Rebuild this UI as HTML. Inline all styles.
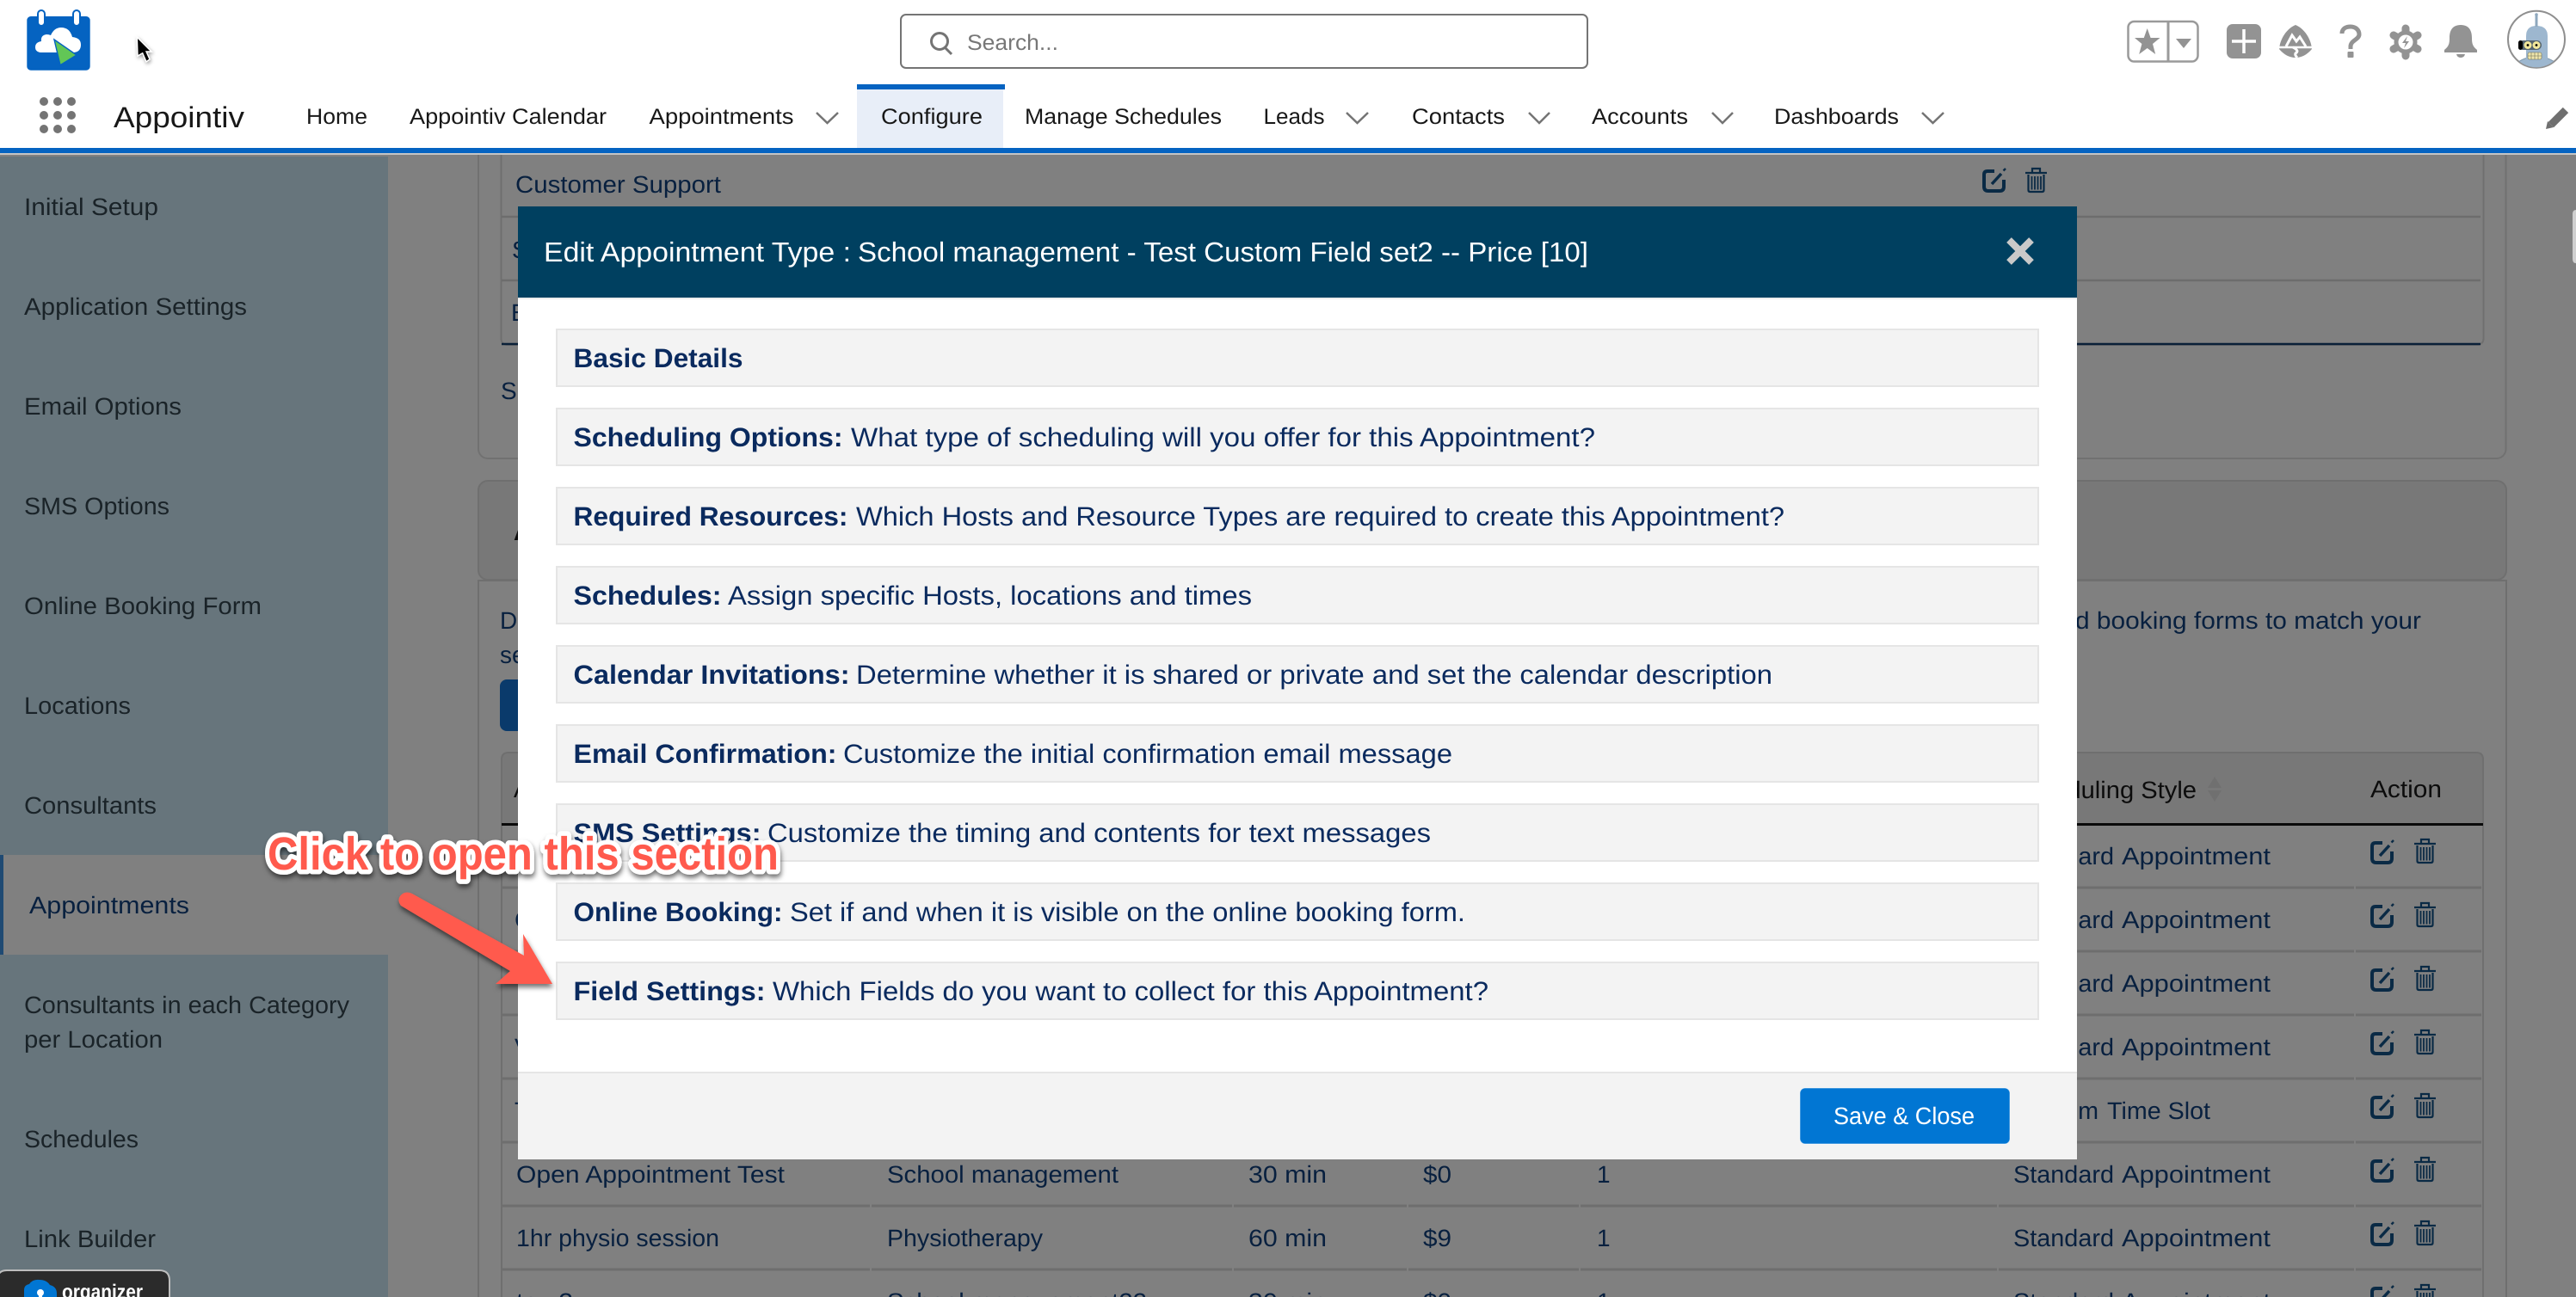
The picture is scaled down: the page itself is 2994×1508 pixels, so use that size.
<!DOCTYPE html>
<html lang="en">
<head>
<meta charset="utf-8">
<title>Appointiv - Configure</title>
<style>
html,body{margin:0;padding:0;width:2994px;height:1508px;overflow:hidden;background:#808080}
svg{display:block}
text{font-family:"Liberation Sans",sans-serif;text-rendering:geometricPrecision}
.n{font-size:25.5px;fill:#181818}
.s{font-size:28px;fill:#1a2328}
.b{font-size:28px;fill:#08203f}
.h{font-size:28px;fill:#0c0c0c}
.m{font-size:31px;fill:#0a2a5e}
.mb{font-size:31px;fill:#0a2a5e;font-weight:bold}
.box{fill:#f3f3f3;stroke:#e5e5e5;stroke-width:2}
</style>
</head>
<body>
<svg xmlns="http://www.w3.org/2000/svg" width="2994" height="1508" viewBox="0 0 2994 1508">
<defs>
<g id="ed" fill="none" stroke="#0a2a45">
<path d="M14 3H6Q2 3 2 7V21Q2 26 7 26H20Q25 26 25 21V13" stroke-width="4"/>
<path d="M11 18L22 6" stroke-width="3.5"/>
<path d="M24.500 2.500L27 0" stroke-width="2.500"/>
</g>
<g id="tr" fill="none" stroke="#0a2a45" stroke-width="2.200">
<path d="M0 7H25M8 6V2H17V6"/>
<path d="M3.500 9V27Q3.500 29 5.500 29H19.500Q21.500 29 21.500 27V9"/>
<path d="M7.500 11V26.500M11 11V26.500M14.500 11V26.500M18 11V26.500" stroke-width="1.800"/>
</g>
<clipPath id="av"><circle cx="2948" cy="45.7" r="32.5"/></clipPath>
<filter id="sh" x="-10%" y="-20%" width="120%" height="150%"><feDropShadow dx="1" dy="4" stdDeviation="3" flood-color="#000" flood-opacity=".55"/></filter>
<filter id="cs" x="-50%" y="-50%" width="200%" height="200%"><feDropShadow dx="1" dy="2" stdDeviation="2" flood-color="#000" flood-opacity=".4"/></filter>
</defs>

<!-- page behind overlay -->
<rect width="2994" height="1508" fill="#808080"/>
<rect x="556" y="160" width="2356.500" height="373" rx="11" fill="none" stroke="#717171" stroke-width="2"/>
<rect x="582.500" y="160" width="2304" height="241" rx="7" fill="none" stroke="#6f6f6f" stroke-width="2"/>
<path d="M583 252H2883M583 326H2883" stroke="#6d6d6d" stroke-width="2.500"/>
<path d="M583 400H2883" stroke="#0a2038" stroke-width="2.500"/>
<text class="b" x="599" y="224" textLength="239" lengthAdjust="spacingAndGlyphs">Customer Support</text>
<text class="b" x="595" y="300">S</text>
<text class="b" x="594" y="373">E</text>
<text class="b" x="582" y="464">S</text>
<use href="#ed" x="2304" y="196"/>
<use href="#tr" x="2354" y="194"/>

<rect x="556" y="559" width="2357" height="115" rx="11" fill="#787878" stroke="#6f6f6f" stroke-width="2"/>
<rect x="556" y="675" width="2357" height="860" fill="none" stroke="#6f6f6f" stroke-width="2"/>
<text class="h" x="597" y="628" font-weight="bold">A</text>
<text class="b" x="581" y="731">D</text>
<text class="b" x="581" y="771">se</text>
<text class="b" x="2412" y="731" textLength="402" lengthAdjust="spacingAndGlyphs">d booking forms to match your</text>
<rect x="581" y="790" width="60" height="60" rx="8" fill="#0a3a6b"/>
<path d="M583 958V883Q583 875 591 875H2878Q2886 875 2886 883V958Z" fill="#787878" stroke="#6f6f6f" stroke-width="2"/>
<path d="M583 958V1520M2886 958V1520" stroke="#6f6f6f" stroke-width="2"/>
<rect x="583" y="957" width="2303" height="3" fill="#0a0a0a"/>
<text class="h" x="597" y="927">A</text>
<text class="h" x="2336" y="928" textLength="217" lengthAdjust="spacingAndGlyphs">Scheduling Style</text>
<path d="M2574 903L2582 916H2566ZM2574 932L2582 919H2566Z" fill="#707070"/>
<text class="h" x="2755" y="927" textLength="83" lengthAdjust="spacingAndGlyphs">Action</text>

<!-- rows -->
<path d="M584 1032H2884M584 1106H2884M584 1180H2884M584 1254H2884M584 1328H2884M584 1402H2884M584 1476H2884" stroke="#6e6e6e" stroke-width="3"/>
<path d="M1012 1020V1490M1433 1020V1490M1636 1020V1490M1836 1020V1490M2322 1020V1490M2737 1020V1490" stroke="#808080" stroke-width="2"/>
<text class="b" x="598" y="1079">C</text>
<text class="b" x="598" y="1227">V</text>
<text class="b" x="598" y="1301">T</text>

<text class="b" x="2340" y="1005" textLength="117" lengthAdjust="spacingAndGlyphs">Standard</text><text class="b" x="2466" y="1005" textLength="173" lengthAdjust="spacingAndGlyphs">Appointment</text>
<text class="b" x="2340" y="1079" textLength="117" lengthAdjust="spacingAndGlyphs">Standard</text><text class="b" x="2466" y="1079" textLength="173" lengthAdjust="spacingAndGlyphs">Appointment</text>
<text class="b" x="2340" y="1153" textLength="117" lengthAdjust="spacingAndGlyphs">Standard</text><text class="b" x="2466" y="1153" textLength="173" lengthAdjust="spacingAndGlyphs">Appointment</text>
<text class="b" x="2340" y="1227" textLength="117" lengthAdjust="spacingAndGlyphs">Standard</text><text class="b" x="2466" y="1227" textLength="173" lengthAdjust="spacingAndGlyphs">Appointment</text>
<text class="b" x="2340" y="1301" textLength="99" lengthAdjust="spacingAndGlyphs">Custom</text><text class="b" x="2449" y="1301" textLength="120" lengthAdjust="spacingAndGlyphs">Time Slot</text>

<text class="b" x="600" y="1375" textLength="312" lengthAdjust="spacingAndGlyphs">Open Appointment Test</text>
<text class="b" x="1031" y="1375" textLength="269" lengthAdjust="spacingAndGlyphs">School management</text>
<text class="b" x="1451" y="1375" textLength="91" lengthAdjust="spacingAndGlyphs">30 min</text>
<text class="b" x="1654" y="1375" textLength="33" lengthAdjust="spacingAndGlyphs">$0</text>
<text class="b" x="1856" y="1375">1</text>
<text class="b" x="2340" y="1375" textLength="117" lengthAdjust="spacingAndGlyphs">Standard</text><text class="b" x="2466" y="1375" textLength="173" lengthAdjust="spacingAndGlyphs">Appointment</text>

<text class="b" x="600" y="1449" textLength="236" lengthAdjust="spacingAndGlyphs">1hr physio session</text>
<text class="b" x="1031" y="1449" textLength="181" lengthAdjust="spacingAndGlyphs">Physiotherapy</text>
<text class="b" x="1451" y="1449" textLength="91" lengthAdjust="spacingAndGlyphs">60 min</text>
<text class="b" x="1654" y="1449" textLength="33" lengthAdjust="spacingAndGlyphs">$9</text>
<text class="b" x="1856" y="1449">1</text>
<text class="b" x="2340" y="1449" textLength="117" lengthAdjust="spacingAndGlyphs">Standard</text><text class="b" x="2466" y="1449" textLength="173" lengthAdjust="spacingAndGlyphs">Appointment</text>

<text class="b" x="600" y="1523" textLength="66" lengthAdjust="spacingAndGlyphs">tes 2</text>
<text class="b" x="1031" y="1523" textLength="302" lengthAdjust="spacingAndGlyphs">School management22</text>
<text class="b" x="1451" y="1523" textLength="91" lengthAdjust="spacingAndGlyphs">30 min</text>
<text class="b" x="1654" y="1523" textLength="33" lengthAdjust="spacingAndGlyphs">$0</text>
<text class="b" x="1856" y="1523">1</text>
<text class="b" x="2340" y="1523" textLength="117" lengthAdjust="spacingAndGlyphs">Standard</text><text class="b" x="2466" y="1523" textLength="173" lengthAdjust="spacingAndGlyphs">Appointment</text>

<use href="#ed" x="2755" y="977"/><use href="#tr" x="2806" y="974"/>
<use href="#ed" x="2755" y="1051"/><use href="#tr" x="2806" y="1048"/>
<use href="#ed" x="2755" y="1125"/><use href="#tr" x="2806" y="1122"/>
<use href="#ed" x="2755" y="1199"/><use href="#tr" x="2806" y="1196"/>
<use href="#ed" x="2755" y="1273"/><use href="#tr" x="2806" y="1270"/>
<use href="#ed" x="2755" y="1347"/><use href="#tr" x="2806" y="1344"/>
<use href="#ed" x="2755" y="1421"/><use href="#tr" x="2806" y="1418"/>
<use href="#ed" x="2755" y="1495"/><use href="#tr" x="2806" y="1492"/>

<path d="M2994 244Q2990 244 2990 249V301Q2990 306 2994 306Z" fill="#cfcfcf"/>

<!-- sidebar -->
<rect x="0" y="182" width="451" height="1326" fill="#67757c"/>
<rect x="0" y="994" width="451" height="116" fill="#808080"/>
<rect x="0" y="994" width="4" height="116" fill="#1f4a73"/>
<text class="s" x="28" y="250" textLength="156" lengthAdjust="spacingAndGlyphs">Initial Setup</text>
<text class="s" x="28" y="366" textLength="259" lengthAdjust="spacingAndGlyphs">Application Settings</text>
<text class="s" x="28" y="482" textLength="183" lengthAdjust="spacingAndGlyphs">Email Options</text>
<text class="s" x="28" y="598" textLength="169" lengthAdjust="spacingAndGlyphs">SMS Options</text>
<text class="s" x="28" y="714" textLength="276" lengthAdjust="spacingAndGlyphs">Online Booking Form</text>
<text class="s" x="28" y="830" textLength="124" lengthAdjust="spacingAndGlyphs">Locations</text>
<text class="s" x="28" y="946" textLength="154" lengthAdjust="spacingAndGlyphs">Consultants</text>
<text class="b" x="34" y="1062" textLength="186" lengthAdjust="spacingAndGlyphs">Appointments</text>
<text class="s" x="28" y="1178" textLength="378" lengthAdjust="spacingAndGlyphs">Consultants in each Category</text>
<text class="s" x="28" y="1218" textLength="161" lengthAdjust="spacingAndGlyphs">per Location</text>
<text class="s" x="28" y="1334" textLength="133" lengthAdjust="spacingAndGlyphs">Schedules</text>
<text class="s" x="28" y="1450" textLength="153" lengthAdjust="spacingAndGlyphs">Link Builder</text>

<!-- top header -->
<rect width="2994" height="172" fill="#fff"/>
<rect y="172" width="2994" height="6" fill="#0563c1"/>
<rect y="178" width="2994" height="2" fill="#c4c4c4"/>

<!-- logo -->
<rect x="31.300" y="19" width="73.400" height="62.700" rx="4.500" fill="#0563c1"/>
<rect x="44" y="12" width="8" height="18" rx="4" fill="#fff" stroke="#0563c1" stroke-width="2"/>
<rect x="85" y="12" width="8" height="18" rx="4" fill="#fff" stroke="#0563c1" stroke-width="2"/>
<path d="M47 61Q41 60 41 55Q41 49 48 48Q47 41 54 40Q57 40 59 41Q63 32 71 32Q81 32 84 43Q94 44 94 52Q94 60 86 61Z" fill="#fff"/>
<path d="M63 46L89 64L70 75.700L66.700 61.700Z" fill="#62c656" stroke="#0563c1" stroke-width="1.400"/>

<!-- cursor -->
<path d="M159.300 43.300L160 65L165.700 61.700L170 71.700L174 69L170 60L176 60Z" fill="#000" stroke="#fff" stroke-width="1.400" filter="url(#cs)"/>

<!-- search -->
<rect x="1047" y="17" width="798" height="62" rx="6" fill="#fff" stroke="#747474" stroke-width="2"/>
<circle cx="1092" cy="48" r="9.500" fill="none" stroke="#747474" stroke-width="3"/>
<path d="M1098 55L1106 63" stroke="#747474" stroke-width="3"/>
<text x="1124" y="58" font-size="25.500" fill="#777" textLength="106" lengthAdjust="spacingAndGlyphs">Search...</text>

<!-- star box -->
<rect x="2473.500" y="25" width="81" height="46.500" rx="7" fill="#fff" stroke="#9a9a9a" stroke-width="2.500"/>
<rect x="2518.500" y="25" width="3" height="46" fill="#9a9a9a"/>
<path d="M2495.700 33L2499.600 44H2510.500L2502 51L2505.200 63L2495.700 56L2486.200 63L2489.400 51L2481 44H2491.800Z" fill="#939393"/>
<path d="M2529 45H2547L2538 56Z" fill="#939393"/>

<!-- plus -->
<rect x="2588" y="28" width="40" height="40" rx="7" fill="#939393"/>
<path d="M2608 34V62M2594 48H2622" stroke="#fff" stroke-width="3.500"/>
<!-- trailhead -->
<path d="M2668 29C2678 33 2686 45 2687 57C2681 64 2675 67 2668 67C2661 67 2655 64 2649 57C2650 45 2658 33 2668 29Z" fill="#939393"/>
<path d="M2649 55H2687" stroke="#fff" stroke-width="2.500"/>
<path d="M2657 54L2664 41L2669 48L2673 43L2680 54" stroke="#fff" stroke-width="3" fill="none"/>
<path d="M2665 55Q2673 59 2668 62Q2667 64 2670 67" stroke="#fff" stroke-width="3" fill="none"/>
<!-- question -->
<path d="M2722 39C2722 33 2727 31 2732 31C2738 31 2742 35 2742 40C2742 46 2732 47 2732 54V57" fill="none" stroke="#939393" stroke-width="5"/>
<rect x="2728.500" y="60" width="7" height="7" rx="1" fill="#939393"/>
<!-- gear -->
<g stroke="#939393" stroke-width="9" stroke-linecap="round">
<path d="M2796 33V65M2782 41L2810 57M2782 57L2810 41"/>
</g>
<circle cx="2796" cy="49" r="13.500" fill="#939393"/>
<circle cx="2796" cy="49" r="8.500" fill="#fff"/>
<path d="M2798 42L2792 50H2796L2794 56L2800 48H2796Z" fill="#939393"/>
<!-- bell -->
<path d="M2860 29C2850 29 2847 36 2847 44C2847 51 2846 54 2841 58V61H2879V58C2874 54 2873 51 2873 44C2873 36 2870 29 2860 29Z" fill="#939393"/>
<path d="M2855 63H2865Q2864 67 2860 67Q2856 67 2855 63Z" fill="#939393"/>
<!-- avatar -->
<circle cx="2948" cy="45.700" r="33" fill="#fff" stroke="#8f8f8f" stroke-width="2"/>
<g clip-path="url(#av)">
<ellipse cx="2948" cy="78" rx="24" ry="12" fill="#9db7cf" stroke="#7f98ad"/>
<path d="M2936 72V42Q2936 30 2948 30Q2961 30 2961 42V72Z" fill="#9db7cf"/>
<rect x="2946.500" y="17" width="3" height="14" fill="#8ea7bd"/>
<circle cx="2948" cy="17" r="1.800" fill="#8ea7bd"/>
<rect x="2927" y="47" width="27" height="11" rx="5.500" fill="#55646f"/>
<rect x="2927" y="47" width="5" height="11" rx="2.500" fill="#000"/>
<circle cx="2938" cy="52.500" r="4.500" fill="#f2e79a"/><circle cx="2948" cy="52.500" r="4.500" fill="#f2e79a"/>
<circle cx="2938" cy="52.500" r="1.400" fill="#000"/><circle cx="2948" cy="52.500" r="1.400" fill="#000"/>
<rect x="2938" y="61" width="16" height="8" rx="2" fill="#efe6ac" stroke="#6d6d58" stroke-width=".6"/>
<path d="M2942 61V69M2946 61V69M2950 61V69M2938 65H2954" stroke="#6d6d58" stroke-width=".6"/>
</g>
<!-- pencil -->
<path d="M2982 128L2965 145" stroke="#6f6f6f" stroke-width="9"/>
<path d="M2959 150L2961 141L2968 148Z" fill="#6f6f6f"/>

<!-- nav -->
<rect x="996" y="104" width="170" height="68" fill="#e8eef8"/>
<rect x="996" y="98" width="172" height="6" fill="#0563c1"/>
<g fill="#747474">
<circle cx="51" cy="118" r="5"/><circle cx="67" cy="118" r="5"/><circle cx="83" cy="118" r="5"/>
<circle cx="51" cy="134" r="5"/><circle cx="67" cy="134" r="5"/><circle cx="83" cy="134" r="5"/>
<circle cx="51" cy="150" r="5"/><circle cx="67" cy="150" r="5"/><circle cx="83" cy="150" r="5"/>
</g>
<text x="132" y="148" font-size="34" fill="#181818" textLength="152" lengthAdjust="spacingAndGlyphs">Appointiv</text>
<text class="n" x="356" y="144" textLength="71" lengthAdjust="spacingAndGlyphs">Home</text>
<text class="n" x="476" y="144" textLength="229" lengthAdjust="spacingAndGlyphs">Appointiv Calendar</text>
<text class="n" x="754.500" y="144" textLength="168" lengthAdjust="spacingAndGlyphs">Appointments</text>
<text class="n" x="1024" y="144" textLength="118" lengthAdjust="spacingAndGlyphs">Configure</text>
<text class="n" x="1191" y="144" textLength="229" lengthAdjust="spacingAndGlyphs">Manage Schedules</text>
<text class="n" x="1468.500" y="144" textLength="71" lengthAdjust="spacingAndGlyphs">Leads</text>
<text class="n" x="1641" y="144" textLength="108" lengthAdjust="spacingAndGlyphs">Contacts</text>
<text class="n" x="1850" y="144" textLength="112" lengthAdjust="spacingAndGlyphs">Accounts</text>
<text class="n" x="2062" y="144" textLength="145" lengthAdjust="spacingAndGlyphs">Dashboards</text>
<g fill="none" stroke="#747474" stroke-width="2.500">
<path d="M949 131L961.500 143L974 131"/>
<path d="M1565 131L1577.500 143L1590 131"/>
<path d="M1777 131L1789 143L1801 131"/>
<path d="M1990 131L2002 143L2014 131"/>
<path d="M2234 131L2246.500 143L2259 131"/>
</g>

<!-- modal -->
<rect x="602" y="240" width="1812" height="1108" fill="#fff"/>
<rect x="602" y="240" width="1812" height="106" fill="#004060"/>
<rect x="602" y="346" width="1812" height="2" fill="#ececec"/>
<text x="632" y="304" font-size="32" fill="#fff" textLength="357" lengthAdjust="spacingAndGlyphs">Edit Appointment Type :</text>
<text x="997" y="304" font-size="32" fill="#fff" textLength="849" lengthAdjust="spacingAndGlyphs">School management - Test Custom Field set2 -- Price [10]</text>
<path d="M2335 279L2361 305M2361 279L2335 305" stroke="#c9c9c9" stroke-width="8"/>

<rect class="box" x="647" y="383" width="1722" height="66"/>
<text class="mb" x="666.500" y="427" textLength="197" lengthAdjust="spacingAndGlyphs">Basic Details</text>

<rect class="box" x="647" y="475" width="1722" height="66"/>
<text class="mb" x="666.500" y="519" textLength="313" lengthAdjust="spacingAndGlyphs">Scheduling Options:</text>
<text class="m" x="989" y="519" textLength="865" lengthAdjust="spacingAndGlyphs">What type of scheduling will you offer for this Appointment?</text>

<rect class="box" x="647" y="567" width="1722" height="66"/>
<text class="mb" x="666.500" y="611" textLength="319" lengthAdjust="spacingAndGlyphs">Required Resources:</text>
<text class="m" x="995" y="611" textLength="1079" lengthAdjust="spacingAndGlyphs">Which Hosts and Resource Types are required to create this Appointment?</text>

<rect class="box" x="647" y="659" width="1722" height="66"/>
<text class="mb" x="666.500" y="703" textLength="172" lengthAdjust="spacingAndGlyphs">Schedules:</text>
<text class="m" x="846" y="703" textLength="609" lengthAdjust="spacingAndGlyphs">Assign specific Hosts, locations and times</text>

<rect class="box" x="647" y="751" width="1722" height="66"/>
<text class="mb" x="666.500" y="795" textLength="321" lengthAdjust="spacingAndGlyphs">Calendar Invitations:</text>
<text class="m" x="995" y="795" textLength="1065" lengthAdjust="spacingAndGlyphs">Determine whether it is shared or private and set the calendar description</text>

<rect class="box" x="647" y="843" width="1722" height="66"/>
<text class="mb" x="666.500" y="887" textLength="306" lengthAdjust="spacingAndGlyphs">Email Confirmation:</text>
<text class="m" x="980" y="887" textLength="708" lengthAdjust="spacingAndGlyphs">Customize the initial confirmation email message</text>

<rect class="box" x="647" y="935" width="1722" height="66"/>
<text class="mb" x="666.500" y="979" textLength="218" lengthAdjust="spacingAndGlyphs">SMS Settings:</text>
<text class="m" x="892" y="979" textLength="771" lengthAdjust="spacingAndGlyphs">Customize the timing and contents for text messages</text>

<rect class="box" x="647" y="1027" width="1722" height="66"/>
<text class="mb" x="666.500" y="1071" textLength="243" lengthAdjust="spacingAndGlyphs">Online Booking:</text>
<text class="m" x="918" y="1071" textLength="785" lengthAdjust="spacingAndGlyphs">Set if and when it is visible on the online booking form.</text>

<rect class="box" x="647" y="1119" width="1722" height="66"/>
<text class="mb" x="666.500" y="1163" textLength="223" lengthAdjust="spacingAndGlyphs">Field Settings:</text>
<text class="m" x="898" y="1163" textLength="832" lengthAdjust="spacingAndGlyphs">Which Fields do you want to collect for this Appointment?</text>

<rect x="602" y="1246" width="1812" height="102" fill="#f3f3f3"/>
<rect x="602" y="1246" width="1812" height="2" fill="#e5e5e5"/>
<rect x="2092" y="1265" width="244" height="65" rx="6" fill="#0176d3" stroke="#fff" stroke-opacity=".5"/>
<text x="2131" y="1307" font-size="28" fill="#fff" textLength="164" lengthAdjust="spacingAndGlyphs">Save &amp; Close</text>

<!-- annotation -->
<g filter="url(#sh)">
<text x="311" y="1011" font-size="54" font-weight="bold" fill="#ff5a4e" stroke="#fff" stroke-width="11" stroke-linejoin="round" paint-order="stroke" textLength="594" lengthAdjust="spacingAndGlyphs">Click to open this section</text>
<path d="M479 1039L609 1111L608 1086L642 1144L576 1144L593 1129L466 1053Q460 1045 468 1039Q473 1036 479 1039Z" fill="#ff5a4e"/>
</g>

<!-- organizer tab -->
<path d="M-3 1520V1488Q-3 1477 8 1477H185Q197 1477 197 1489V1520Z" fill="#2b2b2b" stroke="#bdbdbd" stroke-width="2"/>
<path d="M28 1520V1500Q28 1494 34 1493Q38 1487 46 1488Q54 1488 58 1494Q66 1496 66 1504V1520Z" fill="#0176d3"/>
<circle cx="47" cy="1503" r="4" fill="#fff"/><rect x="45" y="1504" width="4" height="6" fill="#fff"/>
<text x="72" y="1510" font-size="24" font-weight="bold" fill="#fff" textLength="94" lengthAdjust="spacingAndGlyphs">organizer</text>
</svg>
</body>
</html>
